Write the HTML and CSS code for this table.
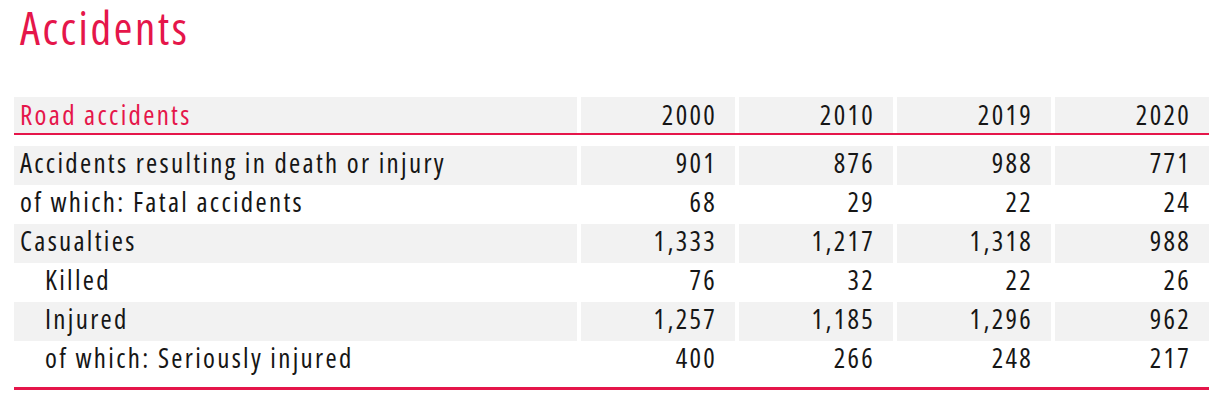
FILE: index.html
```html
<!DOCTYPE html>
<html lang="en">
<head>
<meta charset="utf-8">
<title>Accidents</title>
<link rel="stylesheet" href="styles.css">
</head>
<body>
<h1 class="title">Accidents</h1>
<div class="table">
  <div class="head">
    <div class="cell label">Road accidents</div>
    <div class="cell num">2000</div>
    <div class="cell num">2010</div>
    <div class="cell num">2019</div>
    <div class="cell num">2020</div>
  </div>
  <div class="body">
    <div class="row shade">
      <div class="cell label">Accidents resulting in death or injury</div>
      <div class="cell num">901</div><div class="cell num">876</div><div class="cell num">988</div><div class="cell num">771</div>
    </div>
    <div class="row">
      <div class="cell label">of which: Fatal accidents</div>
      <div class="cell num">68</div><div class="cell num">29</div><div class="cell num">22</div><div class="cell num">24</div>
    </div>
    <div class="row shade">
      <div class="cell label">Casualties</div>
      <div class="cell num">1,333</div><div class="cell num">1,217</div><div class="cell num">1,318</div><div class="cell num">988</div>
    </div>
    <div class="row">
      <div class="cell label indent">Killed</div>
      <div class="cell num">76</div><div class="cell num">32</div><div class="cell num">22</div><div class="cell num">26</div>
    </div>
    <div class="row shade">
      <div class="cell label indent">Injured</div>
      <div class="cell num">1,257</div><div class="cell num">1,185</div><div class="cell num">1,296</div><div class="cell num">962</div>
    </div>
    <div class="row">
      <div class="cell label indent">of which: Seriously injured</div>
      <div class="cell num">400</div><div class="cell num">266</div><div class="cell num">248</div><div class="cell num">217</div>
    </div>
  </div>
</div>
</body>
</html>
```
FILE: styles.css
```css
html, body {
  margin: 0;
  padding: 0;
  background: #ffffff;
}
body {
  font-family: "Open Sans", Lato, sans-serif;
  font-stretch: 87.5%;
  font-weight: 400;
  color: #161616;
}
.title {
  margin: 0;
  padding: 0 0 0 20px;
  font-size: 45px;
  line-height: 56px;
  font-weight: 400;
  letter-spacing: 2.6px;
  color: #e5164a;
  height: 94px;
  box-sizing: border-box;
}
.table {
  margin-left: 14px;
  width: 1195px;
  font-size: 27px;
  letter-spacing: 2.3px;
}
.head,
.row {
  display: grid;
  grid-template-columns: 563px repeat(4, 154px);
  column-gap: 4px;
}
.head {
  margin-top: 3px;
  border-bottom: 2px solid #e5164a;
}
.head .cell {
  background: #f2f2f2;
  line-height: 36px;
  height: 36px;
}
.head .label {
  color: #e5164a;
}
.body {
  margin-top: 11px;
  border-bottom: 3px solid #e5164a;
  padding-bottom: 7px;
}
.row .cell {
  line-height: 34px;
  padding-bottom: 5px;
}
.row.shade .cell {
  background: #f2f2f2;
}
.cell.label {
  padding-left: 6px;
}
.cell.indent {
  padding-left: 31px;
}
.cell.num {
  text-align: right;
  padding-right: 18px;
}
```
